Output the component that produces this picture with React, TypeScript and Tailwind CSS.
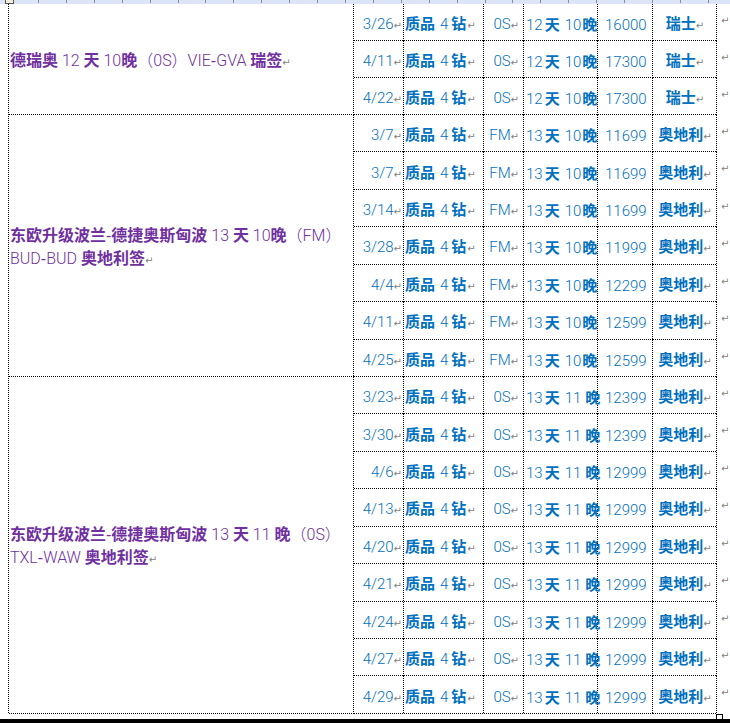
import React from "react";

type Row = { d: string; p: string };
type Group = {
  h: string;
  type: string;
  a: string;
  b: string;
  spaced: boolean;
  country: string;
  rows: Row[];
  title: React.ReactNode;
};

const DOTS =
  "[background-image:linear-gradient(#000_50%,transparent_50%),linear-gradient(90deg,#000_50%,transparent_50%)] [background-size:1px_2px,2px_1px] [background-position:right_top,left_bottom] [background-repeat:repeat-y,repeat-x]";

function Mark({ className = "" }: { className?: string }) {
  return (
    <span
      className={`font-[family-name:DejaVu_Sans,sans-serif] text-[10px] font-normal text-[#7f7f7f] ${className}`}
    >
      ↵
    </span>
  );
}

function Dash() {
  return <span className="font-[family-name:Liberation_Sans,sans-serif] text-[16px]">-</span>;
}

const groups: Group[] = [
  {
    h: "h-[37px]",
    type: "0S",
    a: "12",
    b: "10",
    spaced: false,
    country: "瑞士",
    rows: [
      { d: "3/26", p: "16000" },
      { d: "4/11", p: "17300" },
      { d: "4/22", p: "17300" },
    ],
    title: (
      <span>
        <b className="font-bold">德瑞奥</b> 12 <b className="font-bold">天</b> 10
        <b className="font-bold">晚</b>（0S）VIE<Dash />GVA <b className="font-bold">瑞签</b>
        <Mark />
      </span>
    ),
  },
  {
    h: "h-[37.43px]",
    type: "FM",
    a: "13",
    b: "10",
    spaced: false,
    country: "奥地利",
    rows: [
      { d: "3/7", p: "11699" },
      { d: "3/7", p: "11699" },
      { d: "3/14", p: "11699" },
      { d: "3/28", p: "11999" },
      { d: "4/4", p: "12299" },
      { d: "4/11", p: "12599" },
      { d: "4/25", p: "12599" },
    ],
    title: (
      <span>
        <b className="font-bold">东欧升级波兰</b>
        <Dash />
        <b className="font-bold">德捷奥斯匈波</b> 13 <b className="font-bold">天</b> 10
        <b className="font-bold">晚</b>（FM）
        <br />
        BUD<Dash />BUD <b className="font-bold">奥地利签</b>
        <Mark />
      </span>
    ),
  },
  {
    h: "h-[37.44px]",
    type: "0S",
    a: "13",
    b: "11",
    spaced: true,
    country: "奥地利",
    rows: [
      { d: "3/23", p: "12399" },
      { d: "3/30", p: "12399" },
      { d: "4/6", p: "12999" },
      { d: "4/13", p: "12999" },
      { d: "4/20", p: "12999" },
      { d: "4/21", p: "12999" },
      { d: "4/24", p: "12999" },
      { d: "4/27", p: "12999" },
      { d: "4/29", p: "12999" },
    ],
    title: (
      <span>
        <b className="font-bold">东欧升级波兰</b>
        <Dash />
        <b className="font-bold">德捷奥斯匈波</b> 13 <b className="font-bold">天</b> 11{" "}
        <b className="font-bold">晚</b>（0S）
        <br />
        TXL<Dash />WAW <b className="font-bold">奥地利签</b>
        <Mark />
      </span>
    ),
  },
];

function DataRow({ row, g }: { row: Row; g: Group }) {
  const cell = `shrink-0 flex items-center pt-[5px] ${DOTS}`;
  return (
    <div className={`flex ${g.h}`}>
      <div className={`${cell} w-[50px] justify-end pr-[2px]`}>
        <span>
          {row.d}
          <Mark />
        </span>
      </div>
      <div className={`${cell} w-[80px] pl-[1px]`}>
        <span className="whitespace-nowrap">
          <b className="font-bold">质品</b>
          <span className="ml-[5px]">4</span>
          <b className="font-bold ml-[3px]">钻</b>
          <Mark className="ml-[1px]" />
        </span>
      </div>
      <div className={`${cell} w-[40px] justify-end pr-[5px]`}>
        <span>
          {g.type}
          <Mark />
        </span>
      </div>
      <div className={`${cell} w-[74px] pl-[2px]`}>
        <span className="whitespace-nowrap">
          {g.a}
          <b className="font-bold ml-[2px]">天</b>
          <span className="ml-[5px]">{g.b}</span>
          <b className={g.spaced ? "font-bold ml-[4px]" : "font-bold ml-[1px]"}>晚</b>
        </span>
      </div>
      <div className={`${cell} w-[55px] pl-[7px]`}>
        <span>{row.p}</span>
      </div>
      <div className={`${cell} w-[64px] justify-center`}>
        <span className="whitespace-nowrap">
          <b className="font-bold">{g.country}</b>
          <Mark />
        </span>
      </div>
      <div className="shrink-0 w-[14px] pl-[4px] pt-[8px] leading-none">
        <Mark />
      </div>
    </div>
  );
}

export default function App() {
  const ticks = Array.from({ length: 25 }, (_, i) => i);
  return (
    <div className="relative w-[730px] h-[723px] overflow-hidden bg-white font-[family-name:Roboto,Liberation_Sans,Noto_Sans_CJK_SC,sans-serif] font-light">
      {/* ruler */}
      <div className="h-[4px] bg-[#dbe5f7] flex">
        <div className="w-[38px] shrink-0" />
        {ticks.map((i) => (
          <div key={i} className="w-[27.92px] shrink-0 h-[3px] border-l border-[#8c8c8c]" />
        ))}
      </div>
      <div className="absolute left-[5px] top-0 w-[9px] h-[4px] border-x border-b border-[#555] bg-[#f3ecd9]" />

      {/* table */}
      <div className="ml-[8px] pl-[1px] w-[723px] [background-image:linear-gradient(#000_50%,transparent_50%)] [background-size:1px_2px] [background-position:left_top] [background-repeat:repeat-y]">
        {groups.map((g, gi) => (
          <div key={gi} className="flex">
            <div
              className={`w-[345px] shrink-0 flex items-center pl-[1px] pt-[4px] text-[16px] leading-[23px] text-[#7030a0] whitespace-nowrap ${DOTS}`}
            >
              {g.title}
            </div>
            <div className="flex flex-col text-[15px] leading-[20px] text-[#0070c0]">
              {g.rows.map((r, ri) => (
                <DataRow key={ri} row={r} g={g} />
              ))}
            </div>
          </div>
        ))}
      </div>

      <div className="h-[5px]" />
      <div className="h-[4px] bg-black" />
      <div className="absolute left-[716px] top-[714px] w-[7px] h-[6px] border border-black bg-white" />
    </div>
  );
}
